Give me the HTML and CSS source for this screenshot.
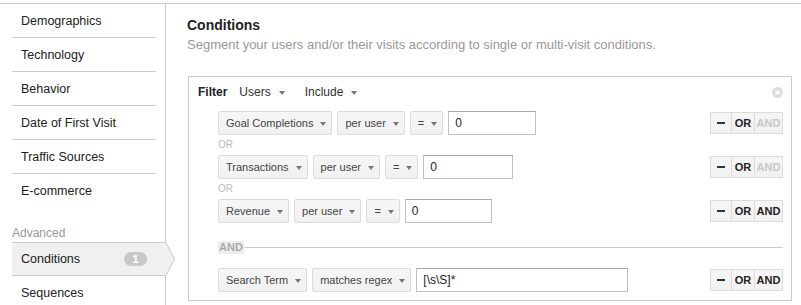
FILE: index.html
```html
<!DOCTYPE html>
<html>
<head>
<meta charset="utf-8">
<link rel="stylesheet" href="styles.css">
</head>
<body>
<div class="page">
  <aside class="sidebar">
    <ul class="nav">
      <li class="nav-item">Demographics</li>
      <li class="nav-item">Technology</li>
      <li class="nav-item">Behavior</li>
      <li class="nav-item">Date of First Visit</li>
      <li class="nav-item">Traffic Sources</li>
      <li class="nav-item last">E-commerce</li>
    </ul>
    <div class="nav-heading">Advanced</div>
    <ul class="nav">
      <li class="nav-item active">Conditions <span class="badge">1</span>
        <svg class="pointer" width="10" height="34" viewBox="0 0 10 34"><polygon points="0,0.5 8.5,17 0,33.5" fill="#f0f0f0"/><polyline points="0,0.5 8.5,17 0,33.5" fill="none" stroke="#c8c8c8" stroke-width="1"/></svg>
      </li>
      <li class="nav-item">Sequences</li>
    </ul>
  </aside>
  <main class="main">
    <h1 class="title">Conditions</h1>
    <p class="subtitle">Segment your users and/or their visits according to single or multi-visit conditions.</p>
    <div class="filter">
      <div class="filter-head">
        <span class="filter-label">Filter</span>
        <span class="head-dd">Users<i class="caret"></i></span>
        <span class="head-dd">Include<i class="caret"></i></span>
        <svg class="close" width="11" height="11" viewBox="0 0 11 11"><circle cx="5.5" cy="5.5" r="5.5" fill="#dcdcdc"/><path d="M3.5 3.5 L7.5 7.5 M7.5 3.5 L3.5 7.5" stroke="#fff" stroke-width="1.4"/></svg>
      </div>
      <div class="filter-body">
        <div class="row">
          <div class="controls">
            <span class="dd">Goal Completions<i class="caret"></i></span>
            <span class="dd">per user<i class="caret"></i></span>
            <span class="dd">=<i class="caret"></i></span>
            <span class="input w1">0</span>
          </div>
          <div class="ops">
            <span class="op minus"><i class="dash"></i></span>
            <span class="op or">OR</span>
            <span class="op and disabled">AND</span>
          </div>
        </div>
        <div class="or-label">OR</div>
        <div class="row">
          <div class="controls">
            <span class="dd">Transactions<i class="caret"></i></span>
            <span class="dd">per user<i class="caret"></i></span>
            <span class="dd">=<i class="caret"></i></span>
            <span class="input w2">0</span>
          </div>
          <div class="ops">
            <span class="op minus"><i class="dash"></i></span>
            <span class="op or">OR</span>
            <span class="op and disabled">AND</span>
          </div>
        </div>
        <div class="or-label">OR</div>
        <div class="row">
          <div class="controls">
            <span class="dd">Revenue<i class="caret"></i></span>
            <span class="dd">per user<i class="caret"></i></span>
            <span class="dd">=<i class="caret"></i></span>
            <span class="input w3">0</span>
          </div>
          <div class="ops">
            <span class="op minus"><i class="dash"></i></span>
            <span class="op or">OR</span>
            <span class="op and">AND</span>
          </div>
        </div>
        <div class="and-sep"><span class="and-label">AND</span><span class="and-line"></span></div>
        <div class="row">
          <div class="controls">
            <span class="dd">Search Term<i class="caret"></i></span>
            <span class="dd">matches regex<i class="caret"></i></span>
            <span class="input w4">[\s\S]*</span>
          </div>
          <div class="ops">
            <span class="op minus"><i class="dash"></i></span>
            <span class="op or">OR</span>
            <span class="op and">AND</span>
          </div>
        </div>
      </div>
    </div>
  </main>
</div>
</body>
</html>
```
FILE: styles.css
```css
html, body {
  margin: 0;
  padding: 0;
  background: #fff;
  overflow: hidden;
}
body {
  font-family: "Liberation Sans", Arial, sans-serif;
  color: #222;
  width: 801px;
  height: 305px;
}
.page {
  margin-top: 3px;
  border-top: 1px solid #ccc;
  display: flex;
  height: 301px;
}
.sidebar {
  flex: none;
  border-right: 1px solid #ccc;
  padding: 0 9px 0 12px;
  box-sizing: border-box;
  width: 166px;
}
.nav {
  list-style: none;
  margin: 0;
  padding: 0;
}
.nav-item {
  height: 33px;
  line-height: 34px;
  border-bottom: 1px solid #ccc;
  padding-left: 9px;
  font-size: 12.5px;
  color: #222;
  position: relative;
}
.nav-item.last {
  border-bottom: none;
}
.nav-heading {
  padding-top: 18px;
  line-height: 17px;
  font-size: 12px;
  color: #999;
}
.nav-item.active {
  background: #f0f0f0;
  border-top: 1px solid #ccc;
  height: 32px;
  line-height: 33px;
  margin-right: -10px;
}
.badge {
  position: absolute;
  left: 112px;
  top: 9px;
  width: 23px;
  height: 14px;
  line-height: 14px;
  border-radius: 7px;
  background: #c8c8c8;
  color: #fff;
  font-size: 11px;
  font-weight: bold;
  text-align: center;
}
.pointer {
  position: absolute;
  left: 100%;
  top: -1px;
  display: block;
}
.main {
  flex: 1;
  padding: 0 9px 0 21px;
  min-width: 0;
}
.title {
  margin: 0;
  padding-top: 12px;
  font-size: 14px;
  line-height: 18px;
  font-weight: bold;
  color: #222;
}
.subtitle {
  margin: 3px 0 0;
  font-size: 13px;
  line-height: 16px;
  color: #999;
}
.filter {
  margin: 23px 0 0 1px;
  border: 1px solid #ccc;
  height: 225px;
  box-sizing: border-box;
}
.filter-head {
  display: flex;
  align-items: center;
  padding: 7px 8px 0 9px;
  height: 16px;
  line-height: 16px;
  font-size: 12px;
  margin-bottom: 11px;
}
.filter-label {
  font-weight: bold;
  color: #222;
  margin-right: 12px;
}
.head-dd {
  color: #333;
  margin-right: 20px;
  display: inline-flex;
  align-items: center;
}
.head-dd .caret {
  margin-left: 8px;
}
.close {
  margin-left: auto;
  display: block;
}
.filter-body {
  padding: 0 8px 0 29px;
}
.row {
  display: flex;
  align-items: center;
  height: 24px;
}
.controls {
  display: flex;
  gap: 5px;
}
.dd {
  display: inline-flex;
  align-items: center;
  height: 24px;
  box-sizing: border-box;
  border: 1px solid #dcdcdc;
  border-radius: 2px;
  background: linear-gradient(#f6f6f6, #f1f1f1);
  padding: 0 5px 0 7px;
  font-size: 11px;
  color: #444;
  white-space: nowrap;
}
.caret {
  display: inline-block;
  width: 0;
  height: 0;
  border-left: 3.5px solid transparent;
  border-right: 3.5px solid transparent;
  border-top: 4px solid #777;
  margin-left: 7px;
  margin-top: 2px;
}
.input {
  display: inline-flex;
  align-items: center;
  height: 24px;
  box-sizing: border-box;
  border: 1px solid #c0c0c0;
  border-top-color: #a8a8a8;
  background: #fff;
  padding: 0 6px;
  font-size: 12px;
  color: #222;
}
.w1 { width: 88px; }
.w2 { width: 90px; }
.w3 { width: 87px; }
.w4 { width: 212px; }
.ops {
  margin-left: auto;
  display: flex;
}
.op {
  display: inline-flex;
  align-items: center;
  justify-content: center;
  height: 22px;
  box-sizing: border-box;
  border: 1px solid #dcdcdc;
  background: linear-gradient(#f6f6f6, #f1f1f1);
  font-size: 11px;
  font-weight: bold;
  color: #222;
  margin-left: -1px;
}
.op.minus { width: 22px; margin-left: 0; }
.op.or { width: 24px; }
.op.and { width: 29px; }
.op.disabled { color: #c8c8c8; }
.dash {
  display: block;
  width: 8px;
  height: 2px;
  background: #333;
}
.or-label {
  height: 20px;
  line-height: 20px;
  font-size: 10px;
  color: #bbb;
}
.and-sep {
  display: flex;
  align-items: center;
  height: 20px;
  margin: 14px 0 11px;
}
.and-label {
  background: #eee;
  font-size: 11px;
  font-weight: bold;
  color: #aaa;
  line-height: 13px;
  padding: 0 1px;
}
.and-line {
  flex: 1;
  height: 1px;
  background: #ccc;
}
```
